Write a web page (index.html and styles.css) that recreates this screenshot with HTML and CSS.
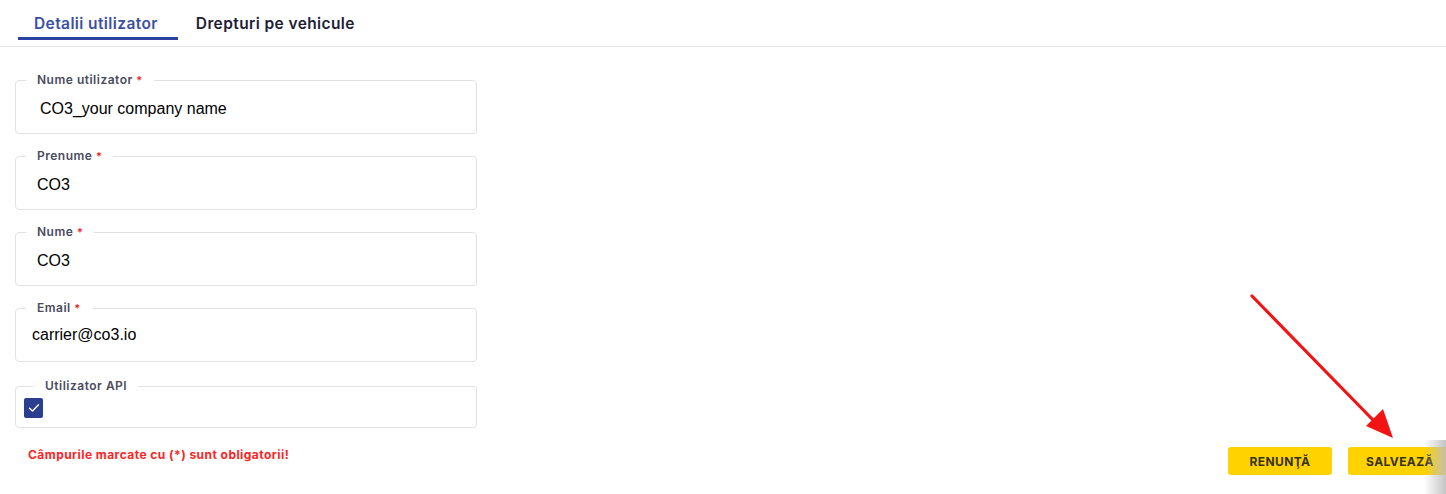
FILE: index.html
```html
<!DOCTYPE html>
<html lang="ro">
<head>
  <meta charset="UTF-8" />
  <meta name="viewport" content="width=device-width, initial-scale=1.0" />
  <title>Detalii utilizator</title>
  <link rel="stylesheet" href="styles.css">
</head>
<body>

<div class="tabs">
  <div class="tab active">Detalii utilizator</div>
  <div class="tab">Drepturi pe vehicule</div>
</div>

<form class="user-form">
  <fieldset class="field">
    <legend>Nume utilizator <span class="req">*</span></legend>
    <input type="text" class="value pad-lg" value="CO3_your company name" />
  </fieldset>

  <fieldset class="field">
    <legend>Prenume <span class="req">*</span></legend>
    <input type="text" class="value pad-md" value="CO3" />
  </fieldset>

  <fieldset class="field">
    <legend>Nume <span class="req">*</span></legend>
    <input type="text" class="value pad-md" value="CO3" />
  </fieldset>

  <fieldset class="field">
    <legend>Email <span class="req">*</span></legend>
    <input type="text" class="value pad-sm value-high" value="carrier@co3.io" />
  </fieldset>

  <fieldset class="field field-check">
    <legend>Utilizator API</legend>
    <span class="checkbox">
      <svg width="12" height="10" viewBox="0 0 12 10">
        <path d="M1.5 5.2 L4.5 8 L10.5 1.8" fill="none" stroke="#fff" stroke-width="1.4" stroke-linecap="round" stroke-linejoin="round"/>
      </svg>
    </span>
  </fieldset>

  <div class="footer">
    <p class="note">Câmpurile marcate cu (*) sunt obligatorii!</p>
    <div class="actions">
      <button type="button" class="btn">RENUNŢĂ</button>
      <button type="button" class="btn">SALVEAZĂ</button>
    </div>
  </div>
</form>

<svg class="arrow" width="160" height="160" viewBox="0 0 160 160">
  <line x1="4" y1="4" x2="126" y2="129" stroke="#f21414" stroke-width="3.2" stroke-linecap="round"/>
  <polygon points="145,146 118,134 135,117" fill="#f21414"/>
</svg>

<div class="edge-shade"></div>

</body>
</html>
```

FILE: styles.css
```css
body {
  margin: 0;
  font-family: Inter, 'Open Sans', sans-serif;
  background: #fff;
  color: #1e2036;
  overflow: hidden;
  position: relative;
  min-height: 494px;
}

.tabs {
  display: flex;
  padding: 0 0 6px 18px;
  border-bottom: 1px solid #e3e3e3;
}

.tab {
  height: 37px;
  padding: 0 20px 0 16px;
  font-size: 15.5px;
  font-weight: 600;
  letter-spacing: 0.4px;
  line-height: 47px;
  border-bottom: 3px solid transparent;
  color: #1e2036;
}

.tab.active {
  color: #3a4fa3;
  border-bottom-color: #2b43a0;
  margin-right: 2px;
}

.user-form {
  width: 462px;
  padding: 26px 0 0 15px;
}

.field {
  margin: 0 0 15px;
  padding: 0;
  border: 1px solid #e2e2e2;
  border-radius: 4px;
  min-width: 0;
}

.field legend {
  margin-left: 10px;
  padding: 0 11px;
  font-size: 12px;
  font-weight: 600;
  letter-spacing: 0.5px;
  line-height: 14px;
  color: #4a4b5c;
}

.req {
  color: #f01e1e;
  font-size: 11px;
}

.value {
  display: block;
  box-sizing: border-box;
  width: 100%;
  height: 46px;
  border: none;
  outline: none;
  background: transparent;
  font-family: 'Liberation Sans', Arial, sans-serif;
  font-size: 16px;
  color: #000;
  padding: 0 0 2px;
}

.value-high {
  padding-bottom: 7px;
}

.pad-lg { padding-left: 24px; }
.pad-md { padding-left: 21px; }
.pad-sm { padding-left: 16px; }

.field-check {
  margin-top: 17px;
  padding: 5px 0 9px 8px;
}

.checkbox {
  display: flex;
  align-items: center;
  justify-content: center;
  width: 19px;
  height: 20px;
  background: #2b3e90;
  border-radius: 2px;
}

.footer {
  display: flex;
  justify-content: space-between;
  align-items: flex-start;
  width: 1437px;
  margin-top: 19px;
}

.note {
  margin: 0 0 0 13px;
  font-size: 12px;
  font-weight: 700;
  letter-spacing: 0.45px;
  line-height: 16px;
  color: #ff2323;
}

.actions {
  display: flex;
  gap: 16px;
}

.btn {
  width: 104px;
  height: 28px;
  background: #ffd200;
  border: none;
  border-radius: 3px;
  font-family: Inter, 'Open Sans', sans-serif;
  font-size: 12px;
  font-weight: 700;
  letter-spacing: 0.4px;
  color: #35321e;
  cursor: pointer;
}

.arrow {
  position: absolute;
  left: 1248px;
  top: 292px;
}

.edge-shade {
  position: absolute;
  right: 0;
  top: 440px;
  width: 22px;
  height: 54px;
  background: linear-gradient(to right, rgba(200, 200, 200, 0), rgba(190, 190, 190, 0.9));
}
```
